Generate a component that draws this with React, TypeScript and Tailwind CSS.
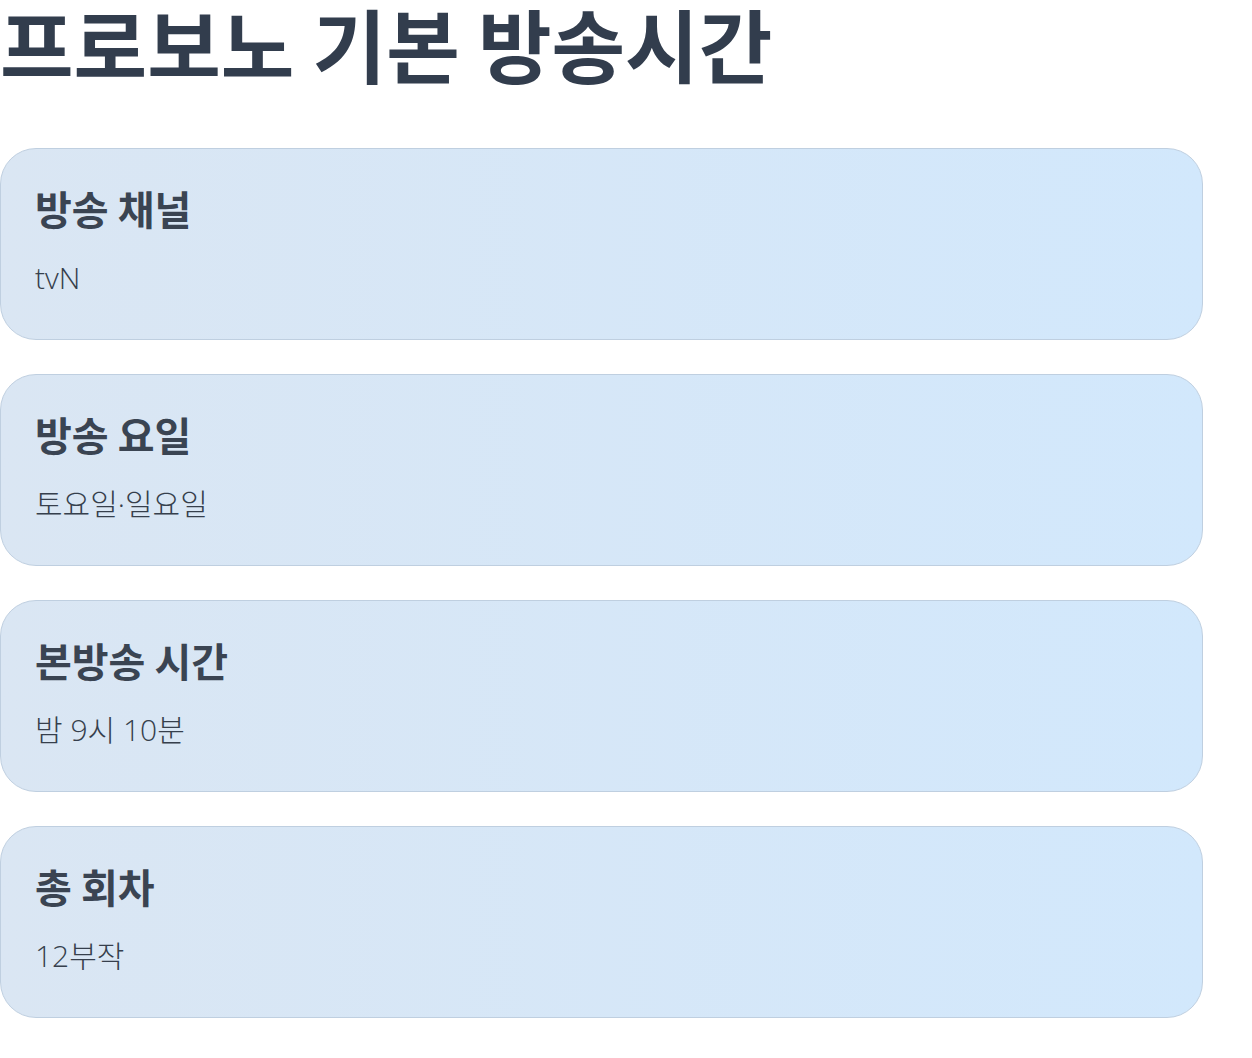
const items = [
  { label: '방송 채널', value: 'tvN' },
  { label: '방송 요일', value: '토요일·일요일' },
  { label: '본방송 시간', value: '밤 9시 10분' },
  { label: '총 회차', value: '12부작' },
];

const App = () => {
  return (
    <div className="min-h-screen bg-white font-['Noto_Sans_CJK_KR',sans-serif]">
      <div className="w-[1203px]">
        <h1 className="text-[80px] leading-[1.1] font-bold text-[#323d4d] -mt-[2px] mb-[62px]">
          프로보노 기본 방송시간
        </h1>
        <div className="flex flex-col gap-[34px]">
          {items.map(item => (
            <div
              key={item.label}
              className="h-[192px] rounded-[36px] border border-[#bfcfe0] bg-gradient-to-r from-[#dae6f3] to-[#d2e8fc] px-[34px] pt-[31px]"
            >
              <h2 className="text-[40px] leading-[56px] font-bold text-[#3a4452] mb-[19px]">
                {item.label}
              </h2>
              <p className="text-[30px] leading-[45px] font-light text-[#363f4c] font-['Open_Sans','Noto_Sans_CJK_KR',sans-serif]">
                {item.value}
              </p>
            </div>
          ))}
        </div>
      </div>
    </div>
  );
};

export default App;
